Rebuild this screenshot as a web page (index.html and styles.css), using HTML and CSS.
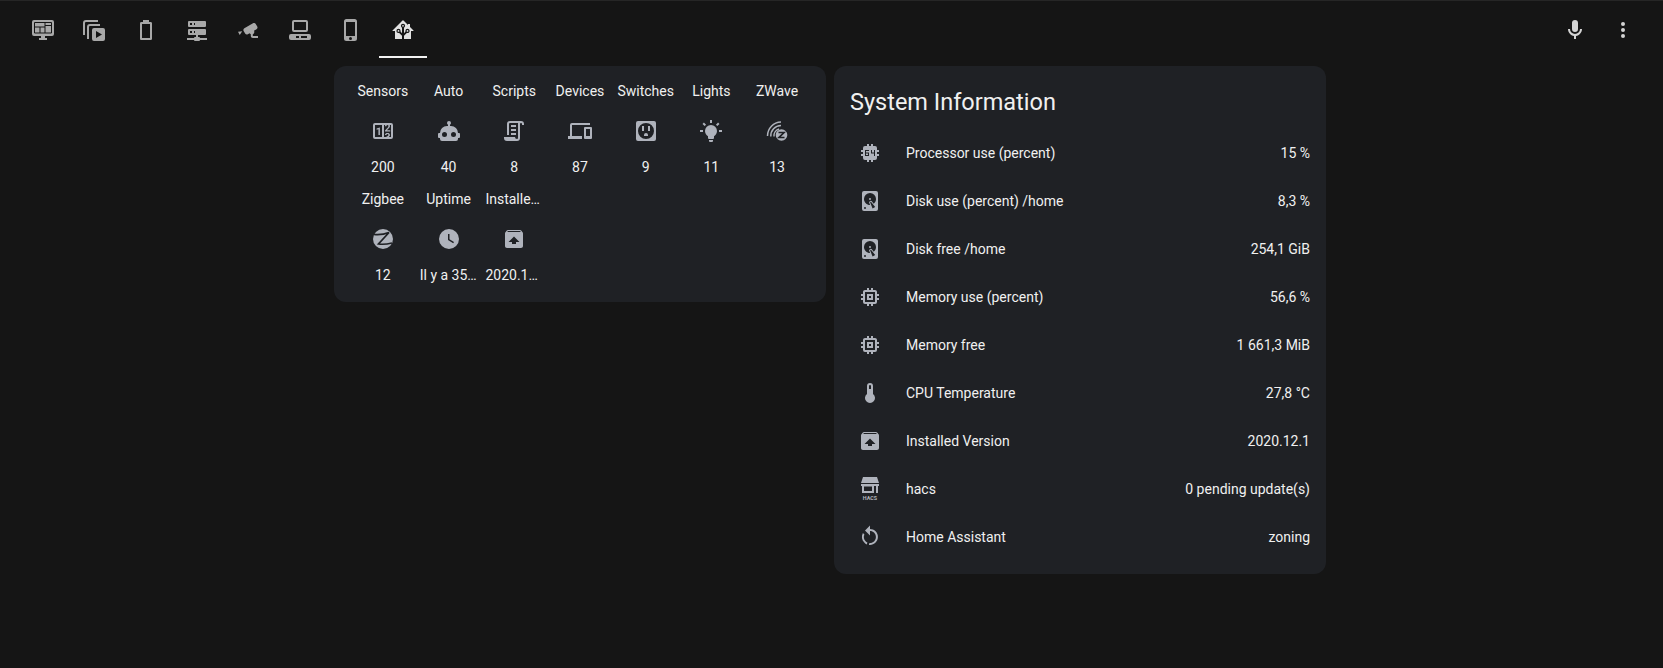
FILE: index.html
```html
<!DOCTYPE html>
<html lang="en">
<head>
<meta charset="utf-8">
<title>Home Assistant</title>
<link rel="stylesheet" href="styles.css">
</head>
<body>
<svg class="defs" aria-hidden="true">
  <symbol id="harddisk" viewBox="0 0 24 24"><path d="M6,2H18A2,2 0 0,1 20,4V20A2,2 0 0,1 18,22H6A2,2 0 0,1 4,20V4A2,2 0 0,1 6,2M12,4A6,6 0 0,0 6,10C6,13.31 8.69,16 12.1,16L11.22,13.77C10.95,13.29 11.11,12.68 11.59,12.4L12.45,11.9C12.93,11.63 13.54,11.79 13.82,12.27L15.74,14.69C17.12,13.59 18,11.9 18,10A6,6 0 0,0 12,4M12,9A1,1 0 0,1 13,10A1,1 0 0,1 12,11A1,1 0 0,1 11,10A1,1 0 0,1 12,9M7,18A1,1 0 0,0 6,19A1,1 0 0,0 7,20A1,1 0 0,0 8,19A1,1 0 0,0 7,18M12.09,13.27L14.58,19.58L17.17,18.08L12.95,12.77L12.09,13.27Z"/></symbol>
  <symbol id="memory" viewBox="0 0 24 24"><path d="M17,17H7V7H17M21,11V9H19V7C19,5.89 18.1,5 17,5H15V3H13V5H11V3H9V5H7C5.89,5 5,5.89 5,7V9H3V11H5V13H3V15H5V17A2,2 0 0,0 7,19H9V21H11V19H13V21H15V19H17A2,2 0 0,0 19,17V15H21V13H19V11M13,13H11V11H13M15,9H9V15H15V9Z"/></symbol>
  <symbol id="package-up" viewBox="0 0 24 24"><path d="M20.54 5.23C20.82 5.57 21 6 21 6.5V19C21 20.1 20.1 21 19 21H5C3.89 21 3 20.1 3 19V6.5C3 6 3.18 5.57 3.46 5.23L4.84 3.55C5.11 3.21 5.53 3 6 3H18C18.47 3 18.88 3.21 19.15 3.55L20.54 5.23M5.12 5H18.87L18.04 4H6.04L5.12 5M12 9.5L6.5 15H10V17H14V15H17.5L12 9.5Z"/></symbol>
</svg>

<header class="toolbar">
  <nav class="tabs">
    <a class="tab"><svg class="icon" viewBox="0 0 24 24"><path d="M3,2H21A2,2 0 0,1 23,4V16A2,2 0 0,1 21,18H14V20H16V22H8V20H10V18H3A2,2 0 0,1 1,16V4A2,2 0 0,1 3,2Z"/><path class="panel-lines" d="M3.5,4.5H20.5V15H3.5ZM14,4.5V15M3.5,9H14M14,7.5H20.5M9,9V15"/></svg></a>
    <a class="tab"><svg class="icon" viewBox="0 0 24 24"><path d="M3,5V17H1V5A3,3 0 0,1 4,2H16V4H4A1,1 0 0,0 3,5ZM7,9V21H5V9A3,3 0 0,1 8,6H18V8H8A1,1 0 0,0 7,9ZM12,10H21A2,2 0 0,1 23,12V21A2,2 0 0,1 21,23H12A2,2 0 0,1 10,21V12A2,2 0 0,1 12,10ZM14,13V20L20,16.5Z" fill-rule="evenodd"/></svg></a>
    <a class="tab"><svg class="icon" viewBox="0 0 24 24"><path d="M16,20H8V6H16M16.67,4H15V2H9V4H7.33A1.33,1.33 0 0,0 6,5.33V20.67C6,21.4 6.6,22 7.33,22H16.67A1.33,1.33 0 0,0 18,20.67V5.33C18,4.6 17.4,4 16.67,4Z"/></svg></a>
    <a class="tab"><svg class="icon" viewBox="0 0 24 24"><path d="M13,19H14A1,1 0 0,1 15,20H22V22H15A1,1 0 0,1 14,23H10A1,1 0 0,1 9,22H2V20H9A1,1 0 0,1 10,19H11V17H4A1,1 0 0,1 3,16V12A1,1 0 0,1 4,11H20A1,1 0 0,1 21,12V16A1,1 0 0,1 20,17H13V19M4,3H20A1,1 0 0,1 21,4V8A1,1 0 0,1 20,9H4A1,1 0 0,1 3,8V4A1,1 0 0,1 4,3M9,7H10V5H9V7M9,15H10V13H9V15M5,5V7H7V5H5M5,13V15H7V13H5Z"/></svg></a>
    <a class="tab"><svg class="icon" viewBox="0 0 24 24"><path d="M18.15,4.94C17.77,4.91 17.37,5 17,5.2L8.35,10.2C7.39,10.76 7.07,12 7.62,12.94L9.12,15.53C9.67,16.5 10.89,16.82 11.85,16.27L13.65,15.23C13.92,15.69 14.32,16.06 14.81,16.27V18.04C14.81,19.13 15.7,20 16.81,20H22V18.04H16.81V16.27C17.72,15.87 18.31,14.97 18.31,14C18.31,13.54 18.19,13.11 17.97,12.73L20.5,11.27C21.47,10.71 21.8,9.5 21.24,8.53L19.74,5.94C19.4,5.34 18.79,5 18.15,4.94M6.22,13.17L2,13.87L3.75,16.89L6.22,13.17Z"/></svg></a>
    <a class="tab"><svg class="icon" viewBox="0 0 24 24"><path fill-rule="evenodd" d="M6,2H18A2,2 0 0,1 20,4V12A2,2 0 0,1 18,14H6A2,2 0 0,1 4,12V4A2,2 0 0,1 6,2ZM6,4V12H18V4ZM3,16H21A2,2 0 0,1 23,18V20A2,2 0 0,1 21,22H3A2,2 0 0,1 1,20V18A2,2 0 0,1 3,16ZM8,18V20H11V18ZM13,18V20H19V18Z"/></svg></a>
    <a class="tab"><svg class="icon" viewBox="0 0 24 24"><path d="M16,18H7V4H16M11.5,22A1.5,1.5 0 0,1 10,20.5A1.5,1.5 0 0,1 11.5,19A1.5,1.5 0 0,1 13,20.5A1.5,1.5 0 0,1 11.5,22M15.5,1H7.5A2.5,2.5 0 0,0 5,3.5V20.5A2.5,2.5 0 0,0 7.5,23H15.5A2.5,2.5 0 0,0 18,20.5V3.5A2.5,2.5 0 0,0 15.5,1Z"/></svg></a>
    <a class="tab tab-active"><svg class="icon" viewBox="0 0 24 24"><path d="M21.8,13H20V21H13V17.67L15.79,14.88L16.5,15C17.66,15 18.6,14.06 18.6,12.9C18.6,11.74 17.66,10.8 16.5,10.8A2.1,2.1 0 0,0 14.4,12.9L14.5,13.61L13,15.13V9.65C13.66,9.29 14.1,8.6 14.1,7.8A2.1,2.1 0 0,0 12,5.7A2.1,2.1 0 0,0 9.9,7.8C9.9,8.6 10.34,9.29 11,9.65V15.13L9.5,13.61L9.6,12.9A2.1,2.1 0 0,0 7.5,10.8A2.1,2.1 0 0,0 5.4,12.9A2.1,2.1 0 0,0 7.5,15L8.21,14.88L11,17.67V21H4V13H2.25C1.83,13 1.42,13 1.42,12.79C1.43,12.58 1.85,12.15 2.28,11.72L11,3C11.33,2.67 11.67,2.33 12,2.33C12.33,2.33 12.67,2.67 13,3L17,7V6H19V9L21.78,11.78C22.18,12.18 22.59,12.59 22.6,12.8C22.6,13 22.2,13 21.8,13M7.5,12A0.9,0.9 0 0,1 8.4,12.9A0.9,0.9 0 0,1 7.5,13.8A0.9,0.9 0 0,1 6.6,12.9A0.9,0.9 0 0,1 7.5,12M16.5,12C17,12 17.4,12.4 17.4,12.9C17.4,13.4 17,13.8 16.5,13.8A0.9,0.9 0 0,1 15.6,12.9A0.9,0.9 0 0,1 16.5,12M12,6.9C12.5,6.9 12.9,7.3 12.9,7.8C12.9,8.3 12.5,8.7 12,8.7C11.5,8.7 11.1,8.3 11.1,7.8C11.1,7.3 11.5,6.9 12,6.9Z"/></svg></a>
  </nav>
  <div class="actions">
    <a class="action"><svg class="icon" viewBox="0 0 24 24"><path d="M12,2A3,3 0 0,1 15,5V11A3,3 0 0,1 12,14A3,3 0 0,1 9,11V5A3,3 0 0,1 12,2M19,11C19,14.53 16.39,17.44 13,17.93V21H11V17.93C7.61,17.44 5,14.53 5,11H7A5,5 0 0,0 12,16A5,5 0 0,0 17,11H19Z"/></svg></a>
    <a class="action"><svg class="icon" viewBox="0 0 24 24"><path d="M12,16A2,2 0 0,1 14,18A2,2 0 0,1 12,20A2,2 0 0,1 10,18A2,2 0 0,1 12,16M12,10A2,2 0 0,1 14,12A2,2 0 0,1 12,14A2,2 0 0,1 10,12A2,2 0 0,1 12,10M12,4A2,2 0 0,1 14,6A2,2 0 0,1 12,8A2,2 0 0,1 10,6A2,2 0 0,1 12,4Z"/></svg></a>
  </div>
</header>

<main class="columns">
  <section class="card glance">
    <div class="glance-item"><div class="glance-name">Sensors</div><svg class="icon" viewBox="0 0 24 24"><path d="M4,4H20A2,2 0 0,1 22,6V18A2,2 0 0,1 20,20H4A2,2 0 0,1 2,18V6A2,2 0 0,1 4,4M4,6V18H11V6H4M20,18V6H18.76C19,6.54 18.95,7.07 18.95,7.13C18.88,7.8 18.41,8.5 18.24,8.75L15.91,11.3L19.23,11.28L19.24,12.5L14.04,12.47L14,11.47C14,11.47 17.05,8.24 17.2,7.95C17.34,7.67 17.91,6 16.5,6C15.27,6.05 15.41,7.3 15.41,7.3L13.87,7.31C13.87,7.31 13.88,6.65 14.25,6H13V18H15.58L15.57,17.14L16.54,17.13C16.54,17.13 17.45,16.97 17.46,16.08C17.5,15.08 16.65,15.08 16.5,15.08C16.37,15.08 15.43,15.13 15.43,15.95H13.91C13.91,15.95 13.95,13.89 16.5,13.89C19.1,13.89 18.96,15.91 18.96,15.91C18.96,15.91 19,17.16 17.85,17.63L18.37,18H20M8.92,16H7.42V10.2L5.62,10.76V9.53L8.76,8.41H8.92V16Z"/></svg><div class="glance-value">200</div></div>
    <div class="glance-item"><div class="glance-name">Auto</div><svg class="icon" viewBox="0 0 24 24"><path d="M12,2A2,2 0 0,1 14,4C14,4.74 13.6,5.39 13,5.73V7H14A7,7 0 0,1 21,14H22A1,1 0 0,1 23,15V18A1,1 0 0,1 22,19H21V20A2,2 0 0,1 19,22H5A2,2 0 0,1 3,20V19H2A1,1 0 0,1 1,18V15A1,1 0 0,1 2,14H3A7,7 0 0,1 10,7H11V5.73C10.4,5.39 10,4.74 10,4A2,2 0 0,1 12,2M7.5,13A2.5,2.5 0 0,0 5,15.5A2.5,2.5 0 0,0 7.5,18A2.5,2.5 0 0,0 10,15.5A2.5,2.5 0 0,0 7.5,13M16.5,13A2.5,2.5 0 0,0 14,15.5A2.5,2.5 0 0,0 16.5,18A2.5,2.5 0 0,0 19,15.5A2.5,2.5 0 0,0 16.5,13Z"/></svg><div class="glance-value">40</div></div>
    <div class="glance-item"><div class="glance-name">Scripts</div><svg class="icon" viewBox="0 0 24 24"><path d="M15,20A1,1 0 0,0 16,19V4H8A1,1 0 0,0 7,5V16H5V5A3,3 0 0,1 8,2H19A3,3 0 0,1 22,5V6H20V5A1,1 0 0,0 19,4A1,1 0 0,0 18,5V9L18,19A3,3 0 0,1 15,22H5A3,3 0 0,1 2,19V18H13A2,2 0 0,0 15,20M9,6H14V8H9V6M9,10H14V12H9V10M9,14H14V16H9V14Z"/></svg><div class="glance-value">8</div></div>
    <div class="glance-item"><div class="glance-name">Devices</div><svg class="icon" viewBox="0 0 24 24"><path d="M22,17H18V10H22M23,8H17A1,1 0 0,0 16,9V19A1,1 0 0,0 17,20H23A1,1 0 0,0 24,19V9A1,1 0 0,0 23,8M4,6H22V4H4A2,2 0 0,0 2,6V17H0V20H14V17H4V6Z"/></svg><div class="glance-value">87</div></div>
    <div class="glance-item"><div class="glance-name">Switches</div><svg class="icon" viewBox="0 0 24 24"><path fill-rule="evenodd" d="M4,2H20A2,2 0 0,1 22,4V20A2,2 0 0,1 20,22H4A2,2 0 0,1 2,20V4A2,2 0 0,1 4,2ZM12,4A8,8 0 1,0 12,20A8,8 0 1,0 12,4ZM8,7H10V12H8ZM14,7H16V12H14ZM12,14A2,2 0 0,1 14,16V17H10V16A2,2 0 0,1 12,14Z"/></svg><div class="glance-value">9</div></div>
    <div class="glance-item"><div class="glance-name">Lights</div><svg class="icon" viewBox="0 0 24 24"><path d="M12,6A6,6 0 0,1 18,12C18,14.22 16.79,16.16 15,17.2V19A1,1 0 0,1 14,20H10A1,1 0 0,1 9,19V17.2C7.21,16.16 6,14.22 6,12A6,6 0 0,1 12,6M14,21V22A1,1 0 0,1 13,23H11A1,1 0 0,1 10,22V21H14M20,11H23V13H20V11M1,11H4V13H1V11M13,1V4H11V1H13M4.92,3.5L7.05,5.64L5.63,7.05L3.5,4.93L4.92,3.5M16.95,5.63L19.07,3.5L20.5,4.93L18.37,7.05L16.95,5.63Z"/></svg><div class="glance-value">11</div></div>
    <div class="glance-item"><div class="glance-name">ZWave</div><svg class="icon" viewBox="0 0 24 24"><path class="arc" d="M2.5,17A14,14 0 0,1 16,3M5.8,17.5A10.5,10.5 0 0,1 16,6.5M9,17.5A7,7 0 0,1 14,10"/><circle cx="16.5" cy="16" r="5.8"/><path class="cut" d="M13.5,13.5H19L14,18.5H19.5"/></svg><div class="glance-value">13</div></div>
    <div class="glance-item"><div class="glance-name">Zigbee</div><svg class="icon" viewBox="0 0 24 24"><circle cx="12" cy="12" r="10"/><path class="cut" d="M3,7.5C8,8 13,7.5 18,5.5L7.5,17C11,17.5 15,17.5 21,16"/></svg><div class="glance-value">12</div></div>
    <div class="glance-item"><div class="glance-name">Uptime</div><svg class="icon" viewBox="0 0 24 24"><path d="M12,2A10,10 0 0,0 2,12A10,10 0 0,0 12,22A10,10 0 0,0 22,12A10,10 0 0,0 12,2M16.2,16.2L11,13V7H12.5V12.2L17,14.9L16.2,16.2Z"/></svg><div class="glance-value">Il y a 35 minutes</div></div>
    <div class="glance-item"><div class="glance-name">Installed Version</div><svg class="icon"><use href="#package-up"/></svg><div class="glance-value">2020.12.1</div></div>
  </section>

  <section class="card entities">
    <h1 class="card-title">System Information</h1>
    <div class="rows">
      <div class="row"><svg class="icon" viewBox="0 0 24 24"><path fill-rule="evenodd" d="M9,3V5H7A2,2 0 0,0 5,7V9H3V11H5V13H3V15H5V17A2,2 0 0,0 7,19H9V21H11V19H13V21H15V19H17A2,2 0 0,0 19,17V15H21V13H19V11H21V9H19V7A2,2 0 0,0 17,5H15V3H13V5H11V3ZM7,9H11V10H8V11.5H11V15H7ZM8,12.5V14H10V12.5ZM13,9H14V11.5H16V9H17V15H16V12.5H13Z"/></svg><span class="row-name">Processor use (percent)</span><span class="row-value">15 %</span></div>
      <div class="row"><svg class="icon"><use href="#harddisk"/></svg><span class="row-name">Disk use (percent) /home</span><span class="row-value">8,3 %</span></div>
      <div class="row"><svg class="icon"><use href="#harddisk"/></svg><span class="row-name">Disk free /home</span><span class="row-value">254,1 GiB</span></div>
      <div class="row"><svg class="icon"><use href="#memory"/></svg><span class="row-name">Memory use (percent)</span><span class="row-value">56,6 %</span></div>
      <div class="row"><svg class="icon"><use href="#memory"/></svg><span class="row-name">Memory free</span><span class="row-value">1 661,3 MiB</span></div>
      <div class="row"><svg class="icon" viewBox="0 0 24 24"><path d="M15 13V5A3 3 0 0 0 9 5V13A5 5 0 1 0 15 13M12 4A1 1 0 0 1 13 5V8H11V5A1 1 0 0 1 12 4Z"/></svg><span class="row-name">CPU Temperature</span><span class="row-value">27,8 °C</span></div>
      <div class="row"><svg class="icon"><use href="#package-up"/></svg><span class="row-name">Installed Version</span><span class="row-value">2020.12.1</span></div>
      <div class="row"><svg class="icon" viewBox="0 0 24 24"><path fill-rule="evenodd" d="M5,0H19L21,6H3ZM3,7H21V9H20V16H18V9H16V16H4V9H3ZM6,9.5V14H14V9.5Z"/><text class="hacs-label" x="12" y="22.5" text-anchor="middle">HACS</text></svg><span class="row-name">hacs</span><span class="row-value">0 pending update(s)</span></div>
      <div class="row"><svg class="icon" viewBox="0 0 24 24"><path d="M12,4C14.1,4 16.1,4.8 17.6,6.3C20.7,9.4 20.7,14.5 17.6,17.6C15.8,19.5 13.3,20.2 10.9,19.9L11.4,17.9C13.1,18.1 14.9,17.5 16.2,16.2C18.5,13.9 18.5,10.1 16.2,7.7C15.1,6.6 13.5,6 12,6V10.6L7,5.6L12,0.6V4M6.3,17.6C3.7,15 3.2,11 4.9,7.9L6.4,9.4C5.3,11.6 5.7,14.4 7.6,16.3C8.1,16.8 8.7,17.2 9.4,17.5L8.8,19.5C7.9,19.2 7,18.6 6.3,17.6Z"/></svg><span class="row-name">Home Assistant</span><span class="row-value">zoning</span></div>
    </div>
  </section>
</main>
</body>
</html>
```
FILE: styles.css
```css
* { box-sizing: border-box; }

html, body { height: 100%; }

body {
  margin: 0;
  background: #151515;
  color: #e1e1e1;
  font-family: Roboto, "Liberation Sans", sans-serif;
  font-size: 14px;
  overflow: hidden;
}

.defs { display: none; }

.icon {
  display: block;
  width: 24px;
  height: 24px;
  fill: #afb3bc;
  flex: none;
}

.arc {
  fill: none;
  stroke: #afb3bc;
  stroke-width: 1.5;
}

.cut {
  fill: none;
  stroke: #1f2125;
  stroke-width: 1.7;
}

.panel-lines {
  fill: none;
  stroke: #151515;
  stroke-width: 1;
}

.toolbar {
  display: flex;
  justify-content: space-between;
  height: 58px;
  padding: 0 16px 0 17px;
  border-top: 1px solid #262626;
}

.tabs { display: flex; }

.tab {
  display: flex;
  justify-content: center;
  width: 51.45px;
  padding-top: 17px;
  height: 57px;
  position: relative;
}

.tab .icon { fill: #a8a8a8; }

.tab-active .icon { fill: #e1e1e1; }

.tab-active::after {
  content: "";
  position: absolute;
  left: 2px;
  right: 2px;
  bottom: 0;
  height: 2px;
  background: #f2f2f2;
}

.actions { display: flex; }

.action {
  width: 48px;
  padding: 17px 12px 0;
}

.action .icon { fill: #d4d4d4; }

.columns {
  display: flex;
  align-items: flex-start;
  justify-content: center;
  gap: 8px;
  padding: 8px 3px 0 0;
}

.card {
  width: 492px;
  background: #1f2125;
  border-radius: 12px;
}

.glance {
  display: flex;
  flex-wrap: wrap;
  padding: 15px 16px 6px;
}

.glance-item {
  display: flex;
  flex-direction: column;
  align-items: center;
  width: 14.2857%;
  padding: 0 4px;
  height: 107.5px;
  color: #f0f0f0;
}

.glance-name, .glance-value {
  width: 100%;
  line-height: 20px;
  text-align: center;
  white-space: nowrap;
  overflow: hidden;
  text-overflow: ellipsis;
}

.glance-name { height: 20px; margin-bottom: 18px; }

.glance-value { margin-top: 14px; }

.entities { padding: 16px 16px 13px; }

.card-title {
  margin: 0;
  padding-top: 4px;
  font-size: 23.5px;
  font-weight: 400;
  line-height: 32px;
  color: #f0f0f0;
  height: 47px;
}

.rows { display: flex; flex-direction: column; }

.row {
  display: flex;
  align-items: center;
  height: 48px;
  color: #f0f0f0;
}

.row .icon { margin: 0 24px 0 8px; }

.row-name { flex: 1; }

.hacs-label {
  font-family: Roboto, sans-serif;
  font-size: 5.4px;
  font-weight: 700;
}
```
